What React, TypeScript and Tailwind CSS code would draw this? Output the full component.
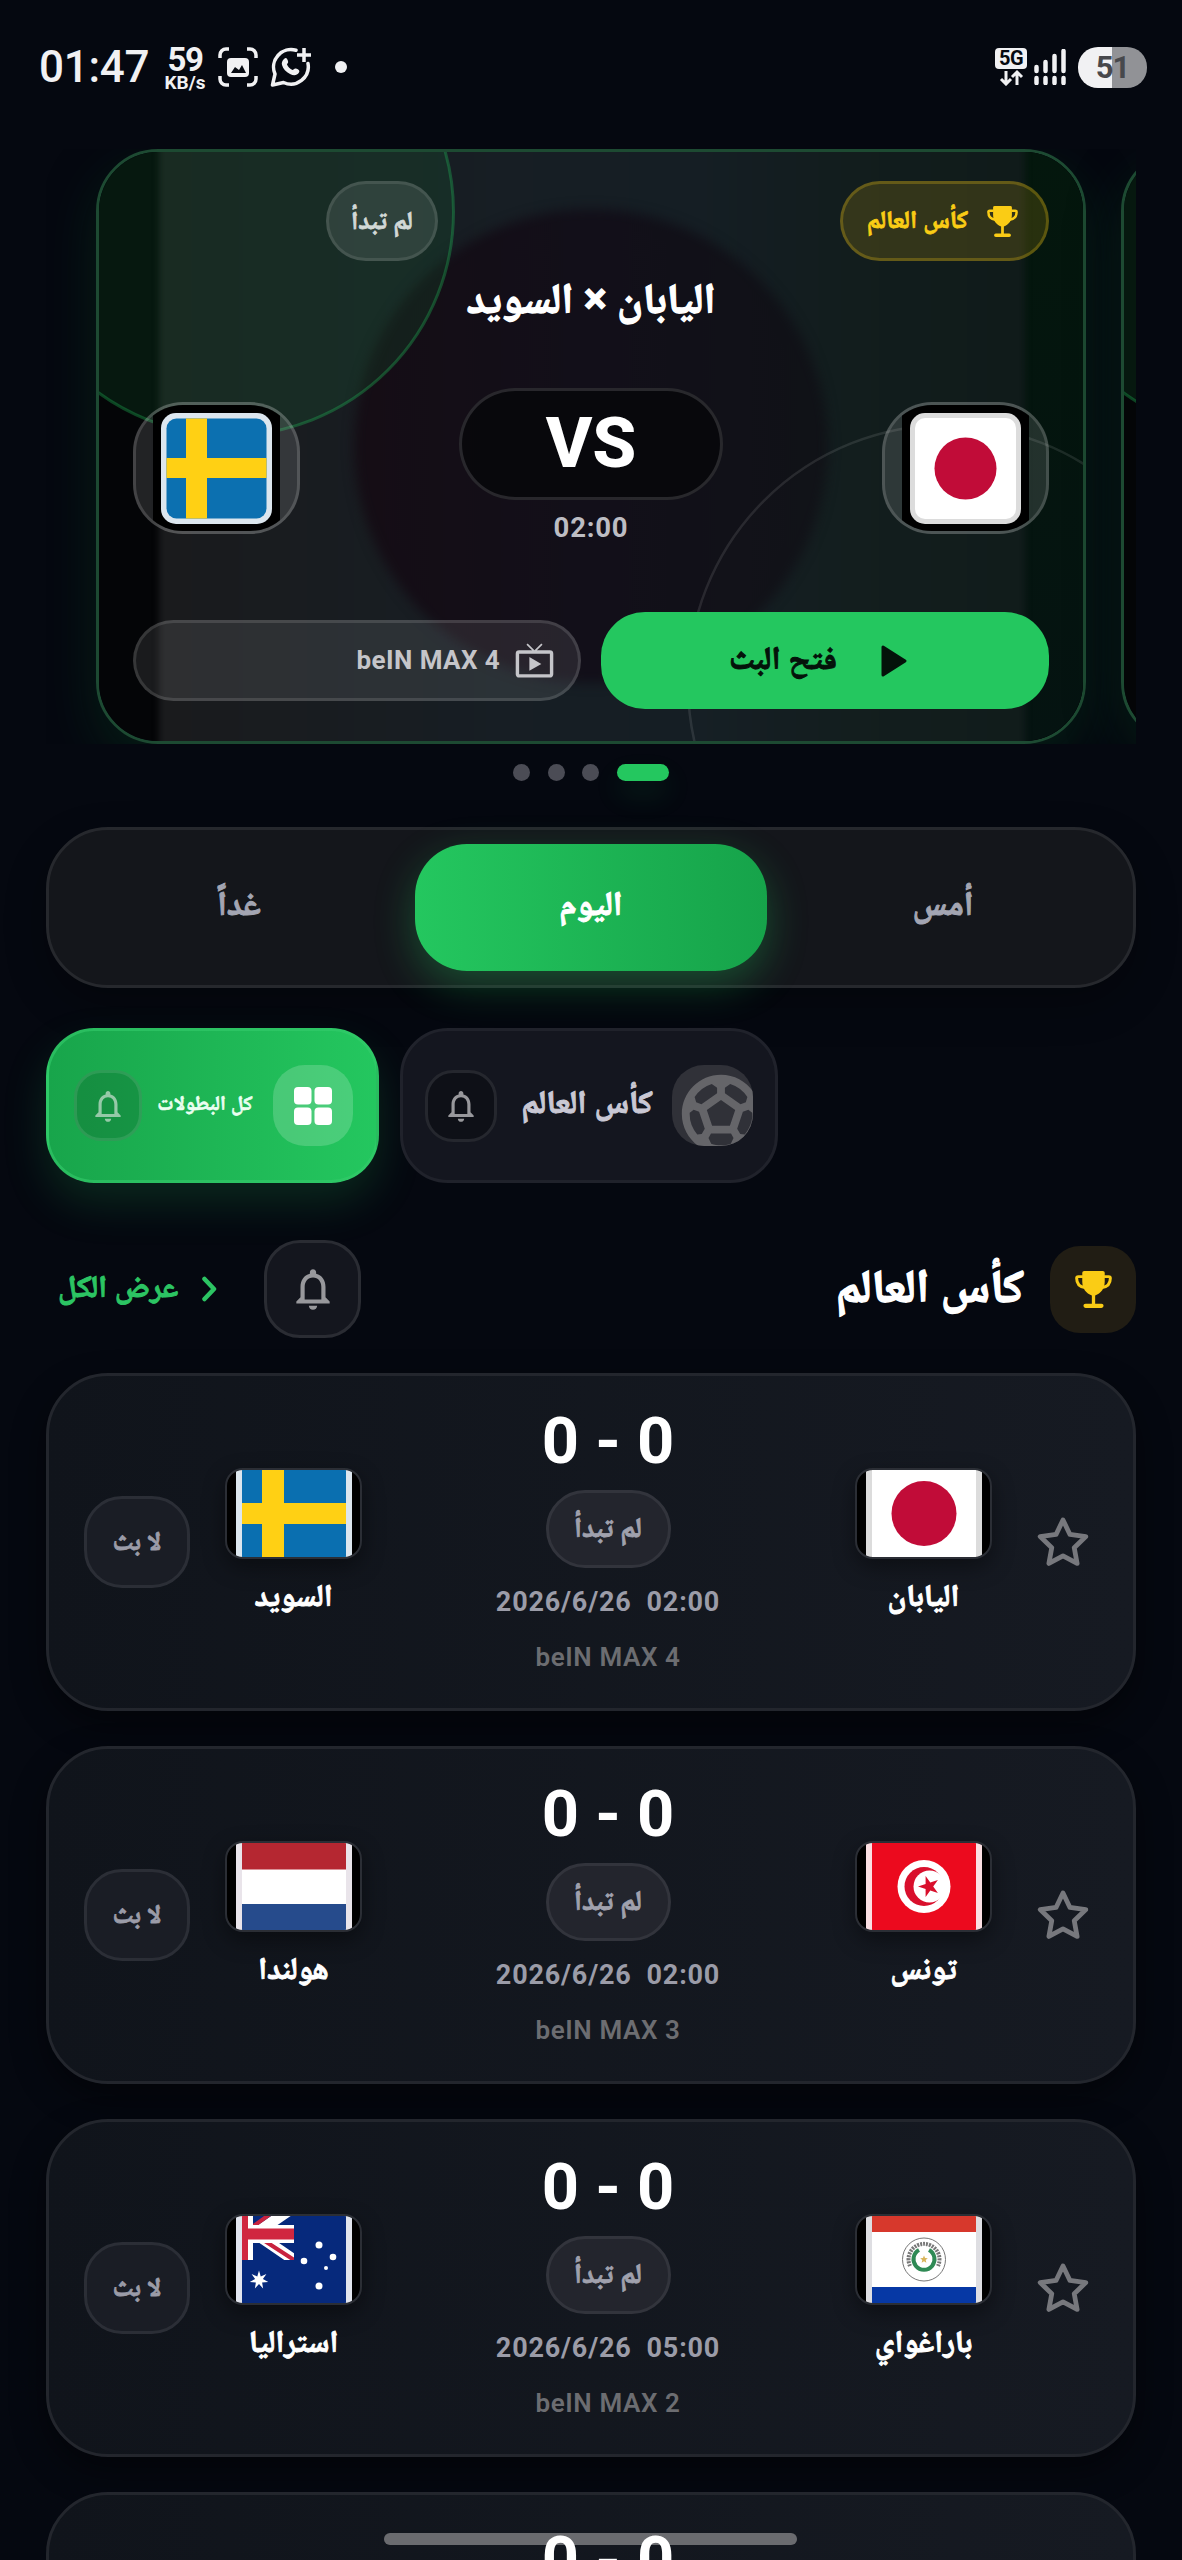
import React from "react";
import { MdNotificationsNone, MdSportsSoccer, MdLiveTv } from "react-icons/md";

type Country = "sweden" | "japan" | "netherlands" | "tunisia" | "australia" | "paraguay";

const starPoints = (cx: number, cy: number, r: number, inner: number, n: number, turn = 0) =>
  Array.from({ length: n * 2 }, (_, i) => {
    const a = (Math.PI * i) / n - Math.PI / 2 + turn;
    const d = i % 2 ? inner : r;
    return `${cx + d * Math.cos(a)},${cy + d * Math.sin(a)}`;
  }).join(" ");

function Trophy({ size, className = "" }: { size: number; className?: string }) {
  return (
    <svg className={className} width={size} height={size} viewBox="0 0 112 112">
      <path
        d="M22 5Q22 0 28 0H84Q90 0 90 5V32C90 54 78 68 61 74V99H80a6.500 6.500 0 0 1 0 13H32a6.500 6.500 0 0 1 0-13H51V74C34 68 22 54 22 32Z"
        fill="currentColor"
      />
      <path d="M24 17H10Q5 17 5 22C5 38 14 48 30 50M88 17h14Q107 17 107 22C107 38 98 48 82 50" fill="none" stroke="currentColor" strokeWidth="9" />
    </svg>
  );
}

/* Flag artwork on a 104 x 87 field */
function FlagArt({ country }: { country: Country }) {
  switch (country) {
    case "sweden":
      return (
        <>
          <rect width="104" height="87" fill="#0a6fb0" />
          <rect x="20" width="22" height="87" fill="#ffd014" />
          <rect y="33" width="104" height="21" fill="#ffd014" />
        </>
      );
    case "japan":
      return (
        <>
          <rect width="104" height="87" fill="#fff" />
          <circle cx="52" cy="43.5" r="32.5" fill="#c10c38" />
        </>
      );
    case "netherlands":
      return (
        <>
          <rect width="104" height="87" fill="#fff" />
          <rect width="104" height="26.5" fill="#b52731" />
          <rect y="61" width="104" height="26" fill="#264b8c" />
        </>
      );
    case "tunisia":
      return (
        <>
          <rect width="104" height="87" fill="#ec0a1e" />
          <circle cx="52" cy="43.5" r="26.5" fill="#fff" />
          <circle cx="52" cy="43.5" r="19.5" fill="#d90f2c" />
          <circle cx="57.5" cy="43.5" r="16" fill="#fff" />
          <polygon points={starPoints(57, 43.5, 11, 4.2, 5, -Math.PI / 2)} fill="#d90f2c" />
        </>
      );
    case "paraguay":
      return (
        <>
          <rect width="104" height="87" fill="#fff" />
          <rect width="104" height="16" fill="#d7382c" />
          <rect y="71" width="104" height="16" fill="#0638a5" />
          <circle cx="52" cy="43.5" r="21.5" fill="none" stroke="#777" strokeWidth="1" />
          <path d="M38 50A15.500 15.500 0 1 1 66 50" fill="none" stroke="#777" strokeWidth="4" strokeDasharray="2 1" />
          <path d="M47 34a10.500 10.500 0 1 0 10 0" fill="none" stroke="#2f8a55" strokeWidth="4" />
          <polygon points={starPoints(52, 43.5, 4, 1.8, 5)} fill="#d9b45a" />
        </>
      );
    case "australia":
      return (
        <>
          <rect width="104" height="87" fill="#06297c" />
          <svg x="0" y="0" width="52" height="44" viewBox="0 0 52 44">
            <path d="M-25 -9L52 44M52 -9L-25 44" stroke="#fff" strokeWidth="11" />
            <path d="M12 18L52 44M6 14L38 -9" stroke="#c8233f" strokeWidth="4" />
            <path d="M0 18H52M2 0V44" stroke="#fff" strokeWidth="18" />
            <path d="M0 18H52" stroke="#d02740" strokeWidth="11" />
            <path d="M2.500 0V44" stroke="#d02740" strokeWidth="7" />
          </svg>
          <polygon points={starPoints(17, 64, 9.5, 4, 7)} fill="#fff" />
          <circle cx="77" cy="29" r="3.500" fill="#fff" />
          <circle cx="62" cy="45" r="3.300" fill="#fff" />
          <circle cx="91" cy="41" r="3.300" fill="#fff" />
          <circle cx="84" cy="52" r="2" fill="#fff" />
          <circle cx="77" cy="70" r="3.500" fill="#fff" />
        </>
      );
  }
}

const edge: Record<Country, string> = {
  sweden: "#dce6ee",
  japan: "#dcdcdc",
  netherlands: "#e9e4ea",
  tunisia: "#fbdfe3",
  australia: "#e2e5ee",
  paraguay: "#dedee2",
};

function CardFlag({ country }: { country: Country }) {
  return (
    <div className="flex h-[91px] w-[137px] justify-center overflow-hidden rounded-[18px] border-2 border-[#2b2e35] bg-black shadow-[0_8px_22px_rgba(0,0,0,0.4)]">
      <svg width="116" height="87" viewBox="0 0 116 87">
        <rect width="116" height="87" fill={edge[country]} />
        <svg x="6" width="104" height="87" viewBox="0 0 104 87">
          <FlagArt country={country} />
        </svg>
      </svg>
    </div>
  );
}

function HeroFlag({ country }: { country: "sweden" | "japan" }) {
  return (
    <div className="flex h-[132px] w-[167px] items-center justify-center overflow-hidden rounded-[50px] border-[3px] border-white/15 bg-white/[0.12]">
      <div className="flex h-[126px] w-[127px] shrink-0 items-center justify-center bg-black">
        <svg width="111" height="111" viewBox="0 0 111 111">
          <rect width="111" height="111" rx="15" fill={edge[country]} />
          {country === "sweden" ? (
            <>
              <rect x="5.500" y="5.500" width="100" height="100" rx="10" fill="#0c70b0" />
              <rect x="25" y="5.500" width="21" height="100" fill="#ffd014" />
              <rect x="5.500" y="45" width="100" height="20" fill="#ffd014" />
            </>
          ) : (
            <>
              <rect x="5" y="5" width="101" height="101" rx="10" fill="#fff" />
              <circle cx="55.500" cy="55.500" r="31" fill="#c10c38" />
            </>
          )}
        </svg>
      </div>
    </div>
  );
}

function Ar({ children, className = "" }: { children: React.ReactNode; className?: string }) {
  return (
    <span dir="rtl" className={"whitespace-nowrap font-bold [-webkit-text-stroke:0.03em_currentColor] " + className}>
      {children}
    </span>
  );
}

function StatusBar() {
  return (
    <header className="flex h-[149px] shrink-0 items-start justify-between pt-[43px] pr-[35px] pl-[39px] text-[#f1f1f3]">
      <div className="flex h-[48px] items-center">
        <span className="w-[124px] text-[44px] leading-[48px] font-medium tracking-[-0.300px]">01:47</span>
        <div className="flex w-[44px] flex-col items-center pt-[3px]">
          <span className="text-[33px] leading-[28px] font-bold tracking-[-1.500px]">59</span>
          <span className="text-[19px] leading-[18px] font-bold">KB/s</span>
        </div>
        <svg className="ml-[11px]" width="40" height="40" viewBox="0 0 40 40">
          <path
            d="M2 11V8a6 6 0 0 1 6-6h3M29 2h3a6 6 0 0 1 6 6v3M38 29v3a6 6 0 0 1-6 6h-3M11 38H8a6 6 0 0 1-6-6v-3"
            fill="none"
            stroke="currentColor"
            strokeWidth="3.500"
          />
          <rect x="9" y="11" width="22" height="19" rx="4" fill="currentColor" />
          <path d="M13 26l4-6 4 3 3-5 4 8z" fill="#060910" />
        </svg>
        <svg className="ml-[12px]" width="42" height="42" viewBox="0 0 42 42">
          <path
            d="M26 4.300A17.500 17.500 0 0 0 5 28L2.500 39l11-2.500A17.500 17.500 0 0 0 38 17.500"
            fill="none"
            stroke="currentColor"
            strokeWidth="3.500"
            strokeLinejoin="round"
            strokeLinecap="round"
          />
          <path
            d="M14 13c2-2 3-1 4 2 .7 2-1 2.500-1 3.500 1 2.500 3 4.500 5.500 5.500 1 0 1.800-2 3.500-1.500 3 1.200 4 2 3 4-2 3-5 3.500-9 1.500-4-2-7-5-8-9-.7-2.500.4-4.500 2-6z"
            fill="currentColor"
          />
          <path d="M34 2v14M27 9h14" stroke="currentColor" strokeWidth="3.500" />
        </svg>
        <span className="ml-[23px] h-[12px] w-[12px] rounded-full bg-current" />
      </div>
      <div className="flex h-[48px] items-center">
        <div className="flex w-[32px] flex-col items-center">
          <div className="flex h-[21px] w-[32px] items-center justify-center rounded-[4px] bg-[#f1f1f3] text-[20px] leading-[21px] font-bold tracking-[-0.5px] text-[#060910]">
            5G
          </div>
          <svg width="26" height="17" viewBox="0 0 26 17">
            <path d="M8 2v12M3 10l5 5 5-5M19 16V4M14 8l5-5 5 5" fill="none" stroke="currentColor" strokeWidth="3" />
          </svg>
        </div>
        <svg className="ml-[7px]" width="33" height="36" viewBox="0 0 33 36">
          <path
            d="M2.500 18v4M11.500 13v9M20.500 7v15M29.500 2v20M2.500 29v5M11.500 29v5M20.500 29v5M29.500 29v5"
            stroke="currentColor"
            strokeWidth="4.500"
            strokeLinecap="round"
          />
        </svg>
        <div className="ml-[11px] flex h-[41px] w-[69px] items-center justify-center rounded-[20px] bg-linear-to-r from-[#f1f1f3] from-50% to-[#919296] to-50% text-[31px] leading-none font-bold tracking-[-1px] text-[#47484c]">
          51
        </div>
      </div>
    </header>
  );
}

function HeroBackdrop() {
  return (
    <svg className="absolute inset-0" width="984" height="589" viewBox="0 0 984 589">
      <defs>
        <linearGradient id="base" x1="0" x2="1">
          <stop offset="0" stopColor="#1a1b1d" />
          <stop offset="0.4" stopColor="#171e24" />
          <stop offset="0.62" stopColor="#151e24" />
          <stop offset="0.8" stopColor="#121d1d" />
          <stop offset="1" stopColor="#101b1a" />
        </linearGradient>
        <linearGradient id="sideR" x1="0" x2="0" y1="0" y2="1">
          <stop offset="0" stopColor="#04170d" />
          <stop offset="1" stopColor="#041210" />
        </linearGradient>
        <linearGradient id="blob" x1="0" x2="1">
          <stop offset="0" stopColor="#150d15" />
          <stop offset="0.5" stopColor="#120f19" />
          <stop offset="1" stopColor="#101217" />
        </linearGradient>
        <filter id="soft" x="-20%" y="-20%" width="140%" height="140%" colorInterpolationFilters="sRGB">
          <feGaussianBlur stdDeviation="6" />
        </filter>
        <filter id="softer" colorInterpolationFilters="sRGB">
          <feGaussianBlur stdDeviation="3" />
        </filter>
      </defs>
      <rect width="984" height="589" fill="#040507" />
      <rect x="900" width="84" height="589" fill="url(#sideR)" />
      <rect x="60" y="-20" width="866" height="640" fill="url(#base)" filter="url(#softer)" />
      <circle cx="492" cy="294" r="237" fill="url(#blob)" filter="url(#soft)" />
      <circle cx="131" cy="60" r="223.500" fill="#16a34a" fillOpacity="0.12" stroke="#22c55e" strokeOpacity="0.32" strokeWidth="3" />
      <circle cx="848" cy="532" r="259" fill="#fff" fillOpacity="0.008" stroke="#fff" strokeOpacity="0.1" strokeWidth="2.500" />
    </svg>
  );
}

function Hero() {
  return (
    <section className="ml-[46px] flex h-[595px] w-[1090px] shrink-0 gap-[35px] overflow-hidden pl-[50px]">
      <article className="relative h-[595px] w-[990px] shrink-0 overflow-hidden rounded-[62px] border-[3px] border-[#1d4a32] shadow-[0_20px_50px_rgba(6,50,25,0.5)]">
        <HeroBackdrop />
        <div className="relative flex h-full flex-col px-[34px] pt-[29px]">
          <div className="flex justify-between">
            <div className="ml-[193px] flex h-[80px] w-[112px] items-center justify-center rounded-full border-[3px] border-white/10 bg-white/10">
              <Ar className="-mt-[2px] text-[25.500px] text-[#d2d8d6]">لم تبدأ</Ar>
            </div>
            <div className="flex h-[80px] w-[209px] items-center justify-end gap-[19px] rounded-full border-[3px] border-[#facc15]/25 bg-[#facc15]/15 pr-[28px] text-[#facc15]">
              <Ar className="-mt-[2px] text-[25px]">كأس العالم</Ar>
              <Trophy size={31} />
            </div>
          </div>
          <h1 className="mt-[10px] flex h-[56px] items-center justify-center text-white">
            <Ar className="text-[42.500px]">اليابان × السويد</Ar>
          </h1>
          <div className="mt-[61px] flex h-[160px] items-start justify-between">
            <div className="mt-[14px]">
              <HeroFlag country="sweden" />
            </div>
            <div className="flex flex-col items-center">
              <div className="flex h-[112px] w-[264px] items-center justify-center rounded-full border-[3px] border-white/[0.13] bg-[#07070b]/85 pb-[3px] text-[71px] leading-none font-extrabold text-white">
                VS
              </div>
              <span className="mt-[12px] text-[27.500px] leading-[32px] font-bold tracking-[0.8px] text-[#bdbdc3]">02:00</span>
            </div>
            <div className="mt-[14px]">
              <HeroFlag country="japan" />
            </div>
          </div>
          <div className="mt-[64px] flex items-center justify-between">
            <div className="flex h-[81px] w-[448px] items-center justify-end gap-[14px] rounded-full border-[3px] border-white/[0.12] bg-white/[0.09] pr-[23px] text-[#c5c5c9]">
              <span className="-mt-[2px] text-[26px] leading-none font-bold tracking-[0.400px]">beIN MAX 4</span>
              <MdLiveTv size={41} />
            </div>
            <div className="flex h-[97px] w-[448px] items-center justify-center gap-[44px] rounded-[44px] bg-[#24c75f] pr-[14px] text-[#04120a]">
              <Ar className="-mt-[5px] text-[32px]">فتح البث</Ar>
              <svg width="26" height="32" viewBox="0 0 26 32">
                <path d="M2 2v28l22-14z" fill="currentColor" stroke="currentColor" strokeWidth="3" strokeLinejoin="round" />
              </svg>
            </div>
          </div>
        </div>
      </article>
      <article className="relative h-[595px] w-[990px] shrink-0 overflow-hidden rounded-[62px] border-[3px] border-[#1d4a32] shadow-[0_20px_50px_rgba(6,50,25,0.5)]">
        <HeroBackdrop />
      </article>
    </section>
  );
}

function Pager() {
  return (
    <div className="mt-[20px] ml-[513px] flex h-[17px] shrink-0 gap-[17.500px]">
      <span className="h-[17px] w-[17px] rounded-full bg-[#4b4c55]" />
      <span className="h-[17px] w-[17px] rounded-full bg-[#4b4c55]" />
      <span className="h-[17px] w-[17px] rounded-full bg-[#4b4c55]" />
      <span className="h-[17px] w-[52px] rounded-full bg-[#24c75f] shadow-[0_14px_28px_rgba(34,197,94,0.12)]" />
    </div>
  );
}

function DayTabs() {
  return (
    <nav className="mx-[46px] mt-[46px] grid h-[161px] shrink-0 grid-cols-3 rounded-[62px] border-[3px] border-[#26282d] bg-[#14161b] p-[14px] text-[#a3a5b2] shadow-[0_16px_40px_rgba(0,0,0,0.3)]">
      <div className="flex items-center justify-center pb-[8px]">
        <Ar className="text-[34px]">غداً</Ar>
      </div>
      <div className="flex items-center justify-center rounded-[52px] bg-linear-to-r from-[#24c75f] to-[#16a34a] pb-[8px] text-white shadow-[0_14px_40px_rgba(34,197,94,0.32)]">
        <Ar className="text-[34px]">اليوم</Ar>
      </div>
      <div className="flex items-center justify-center pb-[8px]">
        <Ar className="text-[34px]">أمس</Ar>
      </div>
    </nav>
  );
}

function LeagueChips() {
  return (
    <div className="mt-[40px] ml-[46px] flex h-[155px] shrink-0 gap-[21px]">
      <div className="flex w-[333px] items-center justify-between rounded-[48px] border-[3px] border-[#35cb6c]/60 bg-linear-to-l from-[#24c75f] to-[#18a54b] pr-[23px] pl-[25px] shadow-[0_20px_44px_rgba(34,197,94,0.17)]">
        <div className="flex h-[71px] w-[68px] items-center justify-center rounded-[27px] border-[3px] border-white/10 bg-black/15 text-[#96c9a8]">
          <MdNotificationsNone size={38} />
        </div>
        <Ar className="-mt-[4px] -ml-[5px] text-[20.500px] text-[#eafff1]">كل البطولات</Ar>
        <div className="flex h-[81px] w-[80px] items-center justify-center rounded-[32px] bg-white/[0.18] text-white">
          <svg width="38" height="38" viewBox="0 0 38 38" fill="currentColor">
            <rect width="17.500" height="17.500" rx="4" />
            <rect x="20.500" width="17.500" height="17.500" rx="4" />
            <rect y="20.500" width="17.500" height="17.500" rx="4" />
            <rect x="20.500" y="20.500" width="17.500" height="17.500" rx="4" />
          </svg>
        </div>
      </div>
      <div className="flex w-[378px] items-center justify-between rounded-[48px] border-[3px] border-[#20222b] bg-[#14161f] pr-[22px] pl-[22px]">
        <div className="flex h-[72px] w-[72px] items-center justify-center rounded-[28px] border-[3px] border-[#25272e] bg-[#0e1017] text-[#98989c]">
          <MdNotificationsNone size={38} />
        </div>
        <Ar className="-mt-[6px] -mr-[5px] text-[32.500px] text-[#c9c8d4]">كأس العالم</Ar>
        <div className="h-[81px] w-[81px] overflow-hidden rounded-[32px] bg-[#303138] text-[#656569]">
          <MdSportsSoccer size={94} className="mt-[2px] ml-[2px]" />
        </div>
      </div>
    </div>
  );
}

function SectionHeader() {
  return (
    <div className="mt-[57px] flex h-[98px] shrink-0 items-center justify-between pr-[46px] pl-[58px]">
      <div className="flex items-center">
        <div className="flex w-[159px] items-center justify-between text-[#2cc463]">
          <Ar className="-mt-[3px] text-[31px]">عرض الكل</Ar>
          <svg width="16" height="26" viewBox="0 0 16 26">
            <path d="M3.500 3L13 13L3.500 23" fill="none" stroke="currentColor" strokeWidth="4.500" strokeLinecap="round" strokeLinejoin="round" />
          </svg>
        </div>
        <div className="ml-[47px] flex h-[98px] w-[97px] items-center justify-center rounded-[36px] border-[3px] border-[#2a2c33] bg-[#14161e] text-[#98989c]">
          <MdNotificationsNone size={50} />
        </div>
      </div>
      <div className="flex items-center gap-[26px]">
        <h2 className="-mt-[5px] text-white">
          <Ar className="text-[46.500px]">كأس العالم</Ar>
        </h2>
        <div className="flex h-[87px] w-[86px] items-center justify-center rounded-[30px] bg-[#211d14] text-[#facc15]">
          <Trophy size={37} />
        </div>
      </div>
    </div>
  );
}

interface Match {
  home: string;
  homeFlag: Country;
  away: string;
  awayFlag: Country;
  time: string;
  channel: string;
}

const matches: Match[] = [
  { home: "اليابان", homeFlag: "japan", away: "السويد", awayFlag: "sweden", time: "02:00", channel: "beIN MAX 4" },
  { home: "تونس", homeFlag: "tunisia", away: "هولندا", awayFlag: "netherlands", time: "02:00", channel: "beIN MAX 3" },
  { home: "باراغواي", homeFlag: "paraguay", away: "استراليا", awayFlag: "australia", time: "05:00", channel: "beIN MAX 2" },
];

function Team({ name, flag }: { name: string; flag: Country }) {
  return (
    <div className="mt-[92px] flex w-[137px] flex-col items-center text-white">
      <CardFlag country={flag} />
      <Ar className="mt-[14px] text-[31px] leading-[46px]">{name}</Ar>
    </div>
  );
}

function Score() {
  return <div className="mt-[28px] text-[65px] leading-[75px] font-bold whitespace-nowrap text-white">0 - 0</div>;
}

function MatchCard({ match }: { match: Match }) {
  return (
    <article className="h-[338px] shrink-0 rounded-[62px] border-[3px] border-[#23262d] bg-linear-to-r from-[#10141b] to-[#161a22] shadow-[0_14px_34px_rgba(0,0,0,0.45)]">
      <div className="flex pl-[35px]">
        <div className="mt-[120px] flex h-[92px] w-[106px] items-center justify-center rounded-[38px] border-[3px] border-[#2b2e36] bg-[#1a1d25] text-[#9b9ca8]">
          <Ar className="-mt-[1px] text-[26px]">لا بث</Ar>
        </div>
        <div className="ml-[35px]">
          <Team name={match.away} flag={match.awayFlag} />
        </div>
        <div className="ml-[96px] flex w-[300px] flex-col items-center">
          <Score />
          <div className="mt-[11px] flex h-[78px] w-[125px] items-center justify-center rounded-full border-[3px] border-[#32343c] bg-[#23252d] text-[#a0a1ad]">
            <Ar className="-mt-[2px] text-[28px]">لم تبدأ</Ar>
          </div>
          <div className="mt-[18px] text-[27px] leading-[32px] font-bold tracking-[0.800px] whitespace-pre text-[#9b9ca8]">
            {"2026/6/26  " + match.time}
          </div>
          <div className="mt-[23px] text-[26px] leading-[32px] font-semibold tracking-[0.600px] text-[#6c6d71]">{match.channel}</div>
        </div>
        <div className="ml-[97px]">
          <Team name={match.home} flag={match.homeFlag} />
        </div>
        <svg className="mt-[139px] ml-[43.500px]" width="54" height="54" viewBox="0 0 54 54">
          <polygon points={starPoints(27, 29, 24, 11.8, 5)} fill="none" stroke="#77787d" strokeWidth="4.800" strokeLinejoin="round" />
        </svg>
      </div>
    </article>
  );
}

export default function App() {
  return (
    <main className="relative flex h-[2560px] w-[1182px] flex-col overflow-hidden bg-[#050810] font-['Roboto','Noto_Naskh_Arabic','Noto_Sans_Arabic','DejaVu_Sans',sans-serif]">
      <StatusBar />
      <Hero />
      <Pager />
      <DayTabs />
      <LeagueChips />
      <SectionHeader />
      <section className="mx-[46px] mt-[35px] flex shrink-0 flex-col gap-[35px]">
        {matches.map((m) => (
          <MatchCard key={m.home} match={m} />
        ))}
        <article className="flex h-[338px] shrink-0 justify-center rounded-[62px] border-[3px] border-[#23262d] bg-linear-to-r from-[#10141b] to-[#161a22] pl-[34px]">
          <div className="relative z-20">
            <Score />
          </div>
        </article>
      </section>
      <div className="absolute bottom-[15px] left-[384px] z-10 h-[12px] w-[413px] rounded-full bg-[#6a6b6f]" />
    </main>
  );
}
